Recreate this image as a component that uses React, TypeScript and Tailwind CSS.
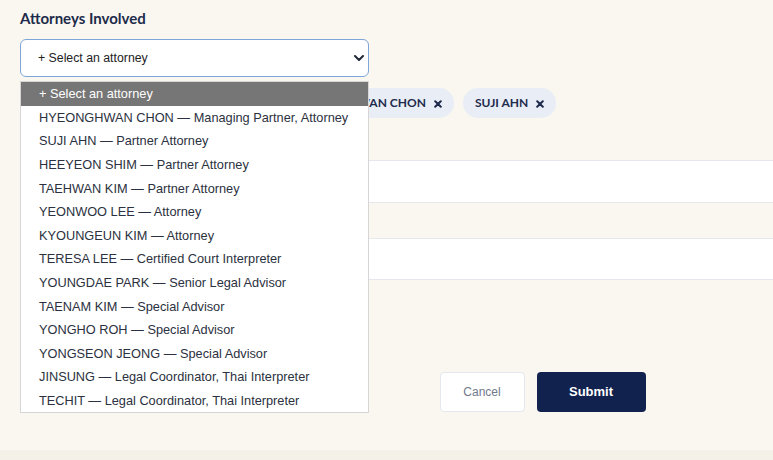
import { useState } from 'react'

const attorneys = [
  { name: 'HYEONGHWAN CHON', role: 'Managing Partner, Attorney' },
  { name: 'SUJI AHN', role: 'Partner Attorney' },
  { name: 'HEEYEON SHIM', role: 'Partner Attorney' },
  { name: 'TAEHWAN KIM', role: 'Partner Attorney' },
  { name: 'YEONWOO LEE', role: 'Attorney' },
  { name: 'KYOUNGEUN KIM', role: 'Attorney' },
  { name: 'TERESA LEE', role: 'Certified Court Interpreter' },
  { name: 'YOUNGDAE PARK', role: 'Senior Legal Advisor' },
  { name: 'TAENAM KIM', role: 'Special Advisor' },
  { name: 'YONGHO ROH', role: 'Special Advisor' },
  { name: 'YONGSEON JEONG', role: 'Special Advisor' },
  { name: 'JINSUNG', role: 'Legal Coordinator, Thai Interpreter' },
  { name: 'TECHIT', role: 'Legal Coordinator, Thai Interpreter' },
]

const sans = "font-['Liberation_Sans',Arial,sans-serif]"
const lato = "font-['Lato','Open_Sans',sans-serif]"

function CloseIcon() {
  return (
    <svg width="8" height="8" viewBox="0 0 8 8" className="mt-[2px]">
      <path d="M1.2 1.2 6.8 6.8M6.8 1.2 1.2 6.8" stroke="#1f2b4d" strokeWidth="2" strokeLinecap="round" />
    </svg>
  )
}

function Chip({ name }: { name: string }) {
  return (
    <span className={`${lato} inline-flex h-[30px] items-center gap-[8px] rounded-full bg-[#e8edf6] px-[12px] text-[12px] font-bold text-[#1f2b4d]`}>
      {name}
      <CloseIcon />
    </span>
  )
}

function Chevron() {
  return (
    <svg width="10" height="6" viewBox="0 0 10 6">
      <path d="M1 1l4 4 4-4" fill="none" stroke="#1f2937" strokeWidth="2" strokeLinecap="round" strokeLinejoin="round" />
    </svg>
  )
}

export default function App() {
  const [selected] = useState(['TAENAM KIM', 'HEEYEON SHIM', 'HYEONGHWAN CHON', 'SUJI AHN'])

  return (
    <div className="flex min-h-screen w-full flex-col overflow-hidden bg-[#f9f7f0]">
      <div className="relative ml-5 w-[1045px] shrink-0 pt-[8px] pb-[38px]">
        <label className={`${lato} block text-[15px] font-bold leading-[20px] text-[#1e2b4a]`}>Attorneys Involved</label>

        <div className="relative mt-[11px] w-[349px]">
          <div className={`${sans} flex h-[38px] items-center justify-between rounded-[6px] border border-[#7fa6d8] bg-white pl-[17px] pr-[4px] text-[12.3px] text-[#222]`}>
            <span>+ Select an attorney</span>
            <Chevron />
          </div>

          {/* open option list */}
          <div className={`${sans} absolute left-0 top-[42px] z-10 w-[349px] border border-[#d6d6d6] bg-white text-[12.75px] text-[#2b3140]`}>
            <div className="flex h-[23.6px] items-center bg-[#767676] pl-[18px] text-white">+ Select an attorney</div>
            {attorneys.map((a) => (
              <div key={a.name} className="flex h-[23.6px] items-center pl-[18px]">
                {a.name} — {a.role}
              </div>
            ))}
          </div>
        </div>

        <div className="mt-[11px] flex flex-wrap gap-x-[9px] gap-y-[8px]">
          {selected.map((n) => (
            <Chip key={n} name={n} />
          ))}
        </div>

        <div className="mt-[42px] h-[43px] w-full border border-[#e7e8ee] bg-white" />
        <div className="mt-[35px] h-[42px] w-full border border-[#e7e8ee] bg-white" />

        <div className={`${sans} mt-[92px] flex justify-center gap-[12px]`}>
          <button className="h-[40px] w-[85px] rounded-[4px] border border-[#e4e7ee] bg-white text-[12px] font-medium text-[#6f7a8c]">
            Cancel
          </button>
          <button className="h-[40px] w-[109px] rounded-[4px] bg-[#10224d] text-[13px] font-bold text-white">
            Submit
          </button>
        </div>
      </div>
      <div className="h-[12px] w-full bg-[#f4f1e8]" />
    </div>
  )
}
